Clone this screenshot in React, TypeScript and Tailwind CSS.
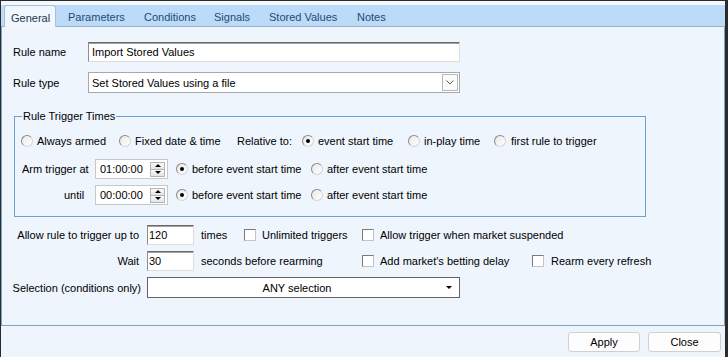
import React from "react";

function Radio({ checked }: { checked?: boolean }) {
  return (
    <span className="relative inline-block w-[12px] h-[12px] shrink-0 rounded-full border border-t-[#8a8a8a] border-l-[#8a8a8a] border-r-[#d6d6d6] border-b-[#d6d6d6] bg-gradient-to-br from-[#e9e9e9] to-white">
      {checked && <span className="absolute left-[3px] top-[3px] w-[4px] h-[4px] rounded-full bg-black" />}
    </span>
  );
}

function Check() {
  return <span className="inline-block w-[12px] h-[12px] shrink-0 border border-t-[#7a7a7a] border-l-[#7a7a7a] border-r-[#c4c4c4] border-b-[#c4c4c4] bg-white" />;
}

function Spinner({ value }: { value: string }) {
  return (
    <div className="w-[73px] h-[20px] border border-[#c8c8c8] bg-white flex items-center shrink-0">
      <span className="pl-[4px] flex-1">{value}</span>
      <div className="w-[15px] h-[15px] mr-[2px] flex flex-col">
        <div className="flex-1 flex items-center justify-center border border-[#b4b4b4] bg-gradient-to-b from-[#fafafa] to-[#e4e4e4]">
          <span className="w-0 h-0 border-l-[3px] border-r-[3px] border-b-[3px] border-l-transparent border-r-transparent border-b-black" />
        </div>
        <div className="flex-1 flex items-center justify-center border border-t-0 border-[#b4b4b4] bg-gradient-to-b from-[#fafafa] to-[#e4e4e4]">
          <span className="w-0 h-0 border-l-[3px] border-r-[3px] border-t-[3px] border-l-transparent border-r-transparent border-t-black" />
        </div>
      </div>
    </div>
  );
}

function TextBox({ w, value, pl }: { w: string; value: string; pl: string }) {
  return (
    <div className={`${w} h-[20px] shrink-0 flex items-center bg-white border border-t-[#6a6a6a] border-l-[#8e8e8e] border-r-[#dedede] border-b-[#dedede] shadow-[inset_0_1px_0_#a0a0a0] ${pl}`}>
      {value}
    </div>
  );
}

export default function App() {
  const tabs = [
    { t: "Parameters", c: "ml-[12px] w-[76px]" },
    { t: "Conditions", c: "w-[70px]" },
    { t: "Signals", c: "w-[55px]" },
    { t: "Stored Values", c: "w-[88px]" },
    { t: "Notes", c: "w-[50px]" },
  ];
  return (
    <div className="w-[728px] h-[357px] overflow-hidden whitespace-nowrap bg-[#eef5fd] border-t border-l border-r-[3px] border-[#2b2b2b] flex flex-col font-['Liberation_Sans',Arial,sans-serif] text-[11px] text-black leading-[14px]">
      <div className="h-[4px] bg-[#f3f8fd] shrink-0" />
      <div className="h-[22px] shrink-0 bg-[#bcdbf8] border-b border-[#8fb2cf] flex items-stretch pl-[3px]">
        <div className="w-[52px] mb-[-1px] pl-[6px] pt-[3px] flex items-center bg-[#f0f7fe] border-l border-t border-r border-[#a3c1da] rounded-t-[3px] text-[#1f3550]">
          General
        </div>
        {tabs.map((x) => (
          <div key={x.t} className={`${x.c} pt-[3px] flex items-center text-[#234a75]`}>
            {x.t}
          </div>
        ))}
      </div>

      <div className="h-[299px] shrink-0 bg-[#eef5fd] border-l border-r border-b border-[#7ea6c0] flex flex-col">
        <div className="flex items-center mt-[15px] h-[20px]">
          <div className="w-[86px] pl-[11px]">Rule name</div>
          <TextBox w="w-[372px]" value="Import Stored Values" pl="pl-[3px]" />
        </div>
        <div className="flex items-center mt-[10px] h-[21px]">
          <div className="w-[86px] pl-[11px]">Rule type</div>
          <div className="w-[372px] h-[21px] bg-white border border-[#a8a8a8] flex items-center">
            <span className="flex-1 pl-[3px]">Set Stored Values using a file</span>
            <span className="w-[16px] h-[17px] mr-[1px] border border-[#b8b8b8] bg-[#fbfbfb] flex items-center justify-center">
              <svg width="8" height="5" viewBox="0 0 8 5">
                <polyline points="0.5,0.5 4,4 7.5,0.5" fill="none" stroke="#555" strokeWidth="1" />
              </svg>
            </span>
          </div>
        </div>

        <fieldset className="ml-[12px] w-[632px] mt-[16px] border border-[#6a9fcf] pb-[11px]">
          <legend className="ml-[7px] px-[1px] leading-[14px]">Rule Trigger Times</legend>
          <div className="flex items-center h-[16px] mt-[10px] pl-[6px]">
            <div className="w-[98px] flex items-center"><Radio /><span className="ml-[4px]">Always armed</span></div>
            <div className="w-[118px] flex items-center"><Radio /><span className="ml-[4px]">Fixed date &amp; time</span></div>
            <div className="w-[65px]">Relative to:</div>
            <div className="w-[106px] flex items-center"><Radio checked /><span className="ml-[4px]">event start time</span></div>
            <div className="w-[86px] flex items-center"><Radio /><span className="ml-[4px]">in-play time</span></div>
            <div className="flex items-center"><Radio /><span className="ml-[5px]">first rule to trigger</span></div>
          </div>
          <div className="flex items-center h-[20px] mt-[10px]">
            <div className="w-[80px] pl-[7px]">Arm trigger at</div>
            <Spinner value="01:00:00" />
            <div className="ml-[8px] w-[135px] flex items-center"><Radio checked /><span className="ml-[4px]">before event start time</span></div>
            <div className="flex items-center"><Radio /><span className="ml-[4px]">after event start time</span></div>
          </div>
          <div className="flex items-center h-[20px] mt-[6px]">
            <div className="w-[80px] pl-[49px]">until</div>
            <Spinner value="00:00:00" />
            <div className="ml-[8px] w-[135px] flex items-center"><Radio checked /><span className="ml-[4px]">before event start time</span></div>
            <div className="flex items-center"><Radio /><span className="ml-[4px]">after event start time</span></div>
          </div>
        </fieldset>

        <div className="flex items-center mt-[8px] h-[20px]">
          <div className="w-[137px] text-right">Allow rule to trigger up to</div>
          <div className="ml-[8px]"><TextBox w="w-[47px]" value="120" pl="pl-[1px]" /></div>
          <div className="ml-[7px] w-[43px]">times</div>
          <div className="w-[118px] flex items-center"><Check /><span className="ml-[6px]">Unlimited triggers</span></div>
          <div className="flex items-center"><Check /><span className="ml-[6px]">Allow trigger when market suspended</span></div>
        </div>
        <div className="flex items-center mt-[6px] h-[20px]">
          <div className="w-[137px] text-right">Wait</div>
          <div className="ml-[8px]"><TextBox w="w-[47px]" value="30" pl="pl-[1px]" /></div>
          <div className="ml-[7px] w-[161px]">seconds before rearming</div>
          <div className="w-[170px] flex items-center"><Check /><span className="ml-[6px]">Add market's betting delay</span></div>
          <div className="flex items-center"><Check /><span className="ml-[7px]">Rearm every refresh</span></div>
        </div>
        <div className="flex items-center mt-[6px] h-[21px]">
          <div className="w-[139px] text-right">Selection (conditions only)</div>
          <div className="ml-[6px] w-[313px] h-[21px] bg-white border border-[#646464] flex items-center">
            <span className="flex-1 text-center">ANY selection</span>
            <span className="mr-[7px] w-0 h-0 border-l-[3px] border-r-[3px] border-t-[3px] border-l-transparent border-r-transparent border-t-black" />
          </div>
        </div>
      </div>

      <div className="h-[31px] shrink-0 flex justify-end items-start pt-[6px] pr-[4px] gap-[8px]">
        <button className="w-[72px] h-[20px] rounded-[3px] border border-[#d0d0d0] bg-[#fdfdfd] text-black">Apply</button>
        <button className="w-[73px] h-[20px] rounded-[3px] border border-[#d0d0d0] bg-[#fdfdfd] text-black">Close</button>
      </div>
    </div>
  );
}
